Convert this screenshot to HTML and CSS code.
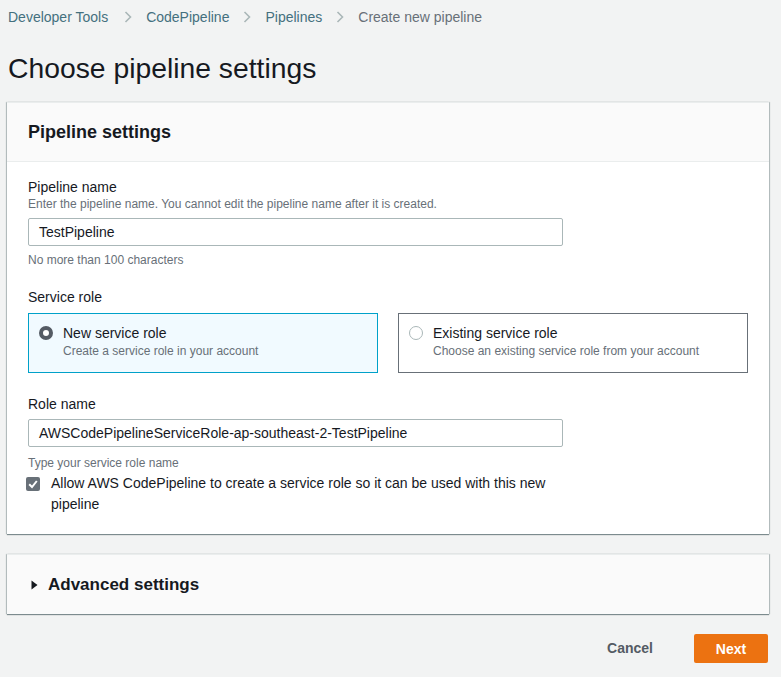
FILE: index.html
```html
<!DOCTYPE html>
<html lang="en">
<head>
<meta charset="utf-8">
<title>Choose pipeline settings</title>
<link rel="stylesheet" href="styles.css">
</head>
<body>
<div class="page">
  <nav class="crumbs">
    <a class="crumb-link crumb-first">Developer Tools</a>
    <svg class="chev" width="8" height="12" viewBox="0 0 8 12"><path d="M1.5 1 L6.5 6 L1.5 11" fill="none" stroke="#aab7b8" stroke-width="1.6"/></svg>
    <a class="crumb-link">CodePipeline</a>
    <svg class="chev" width="8" height="12" viewBox="0 0 8 12"><path d="M1.5 1 L6.5 6 L1.5 11" fill="none" stroke="#aab7b8" stroke-width="1.6"/></svg>
    <a class="crumb-link">Pipelines</a>
    <svg class="chev" width="8" height="12" viewBox="0 0 8 12"><path d="M1.5 1 L6.5 6 L1.5 11" fill="none" stroke="#aab7b8" stroke-width="1.6"/></svg>
    <span class="crumb-current">Create new pipeline</span>
  </nav>

  <h1 class="title">Choose pipeline settings</h1>

  <section class="card">
    <header class="card-header">
      <h2 class="card-title">Pipeline settings</h2>
    </header>
    <div class="card-body">
      <div class="field">
        <div class="label">Pipeline name</div>
        <div class="desc">Enter the pipeline name. You cannot edit the pipeline name after it is created.</div>
        <div class="input">TestPipeline</div>
        <div class="hint">No more than 100 characters</div>
      </div>

      <div class="field field-role">
        <div class="label">Service role</div>
        <div class="tiles">
          <div class="tile tile-selected">
            <span class="radio radio-on"></span>
            <div class="tile-text">
              <div class="tile-title">New service role</div>
              <div class="tile-desc">Create a service role in your account</div>
            </div>
          </div>
          <div class="tile">
            <span class="radio"></span>
            <div class="tile-text">
              <div class="tile-title">Existing service role</div>
              <div class="tile-desc">Choose an existing service role from your account</div>
            </div>
          </div>
        </div>
      </div>

      <div class="field field-rolename">
        <div class="label">Role name</div>
        <div class="input">AWSCodePipelineServiceRole-ap-southeast-2-TestPipeline</div>
        <div class="hint hint-role">Type your service role name</div>
        <div class="check-row">
          <span class="checkbox">
            <svg width="14" height="14" viewBox="0 0 14 14"><path d="M3.2 7.2 L6 10 L10.8 4" fill="none" stroke="#ffffff" stroke-width="2"/></svg>
          </span>
          <span class="check-text">Allow AWS CodePipeline to create a service role so it can be used with this new pipeline</span>
        </div>
      </div>
    </div>
  </section>

  <section class="card card-adv">
    <svg class="caret" width="7" height="10" viewBox="0 0 7 10"><path d="M0.5 0.5 L6.5 5 L0.5 9.5 Z" fill="#16191f"/></svg>
    <h2 class="card-title adv-title">Advanced settings</h2>
  </section>

  <div class="actions">
    <button class="btn-link">Cancel</button>
    <button class="btn-primary">Next</button>
  </div>
</div>
</body>
</html>
```
FILE: styles.css
```css
html, body {
  margin: 0;
  padding: 0;
  background: #f2f3f3;
}
body {
  font-family: "Liberation Sans", Arial, sans-serif;
  color: #16191f;
  font-size: 14px;
}
.page {
  padding: 7px 12px 0 7px;
}
.crumbs {
  display: flex;
  align-items: center;
  gap: 12px;
  height: 20px;
  line-height: 20px;
  padding-left: 1px;
  font-size: 14px;
}
.crumb-link {
  color: #44707e;
}
.crumb-first {
  margin-right: 2px;
}
.crumb-current {
  color: #687078;
}
.chev {
  display: block;
  margin: 0 2px;
}
.title {
  margin: 23px 0 0 1px;
  font-size: 28.3px;
  font-weight: 400;
  line-height: 36px;
  color: #16191f;
}
.card {
  margin-top: 16px;
  width: 762px;
  background: #ffffff;
  border-top: 1px solid #eaeded;
  box-shadow: 0 1px 1px 0 rgba(0, 28, 36, 0.45), 1px 0 1px 0 rgba(0, 28, 36, 0.2), -1px 0 1px 0 rgba(0, 28, 36, 0.2);
}
.card-header {
  background: #fafafa;
  padding: 18px 20px 18px 21px;
  border-bottom: 1px solid #eaeded;
}
.card-title {
  margin: 0;
  font-size: 18px;
  font-weight: 700;
  line-height: 22px;
}
.card-body {
  padding: 16px 20px 19px 21px;
}
.label {
  font-size: 14px;
  line-height: 18px;
}
.desc {
  font-size: 12px;
  line-height: 16px;
  color: #687078;
}
.input {
  box-sizing: border-box;
  margin-top: 6px;
  width: 535px;
  height: 28px;
  border: 1px solid #aab7b8;
  border-radius: 2px;
  background: #ffffff;
  padding: 0 10px;
  line-height: 26px;
  font-size: 14px;
}
.hint {
  margin-top: 6px;
  font-size: 12px;
  line-height: 16px;
  color: #687078;
}
.field-role {
  margin-top: 20px;
}
.tiles {
  margin-top: 7px;
  display: grid;
  grid-template-columns: 350px 350px;
  gap: 20px;
}
.tile {
  box-sizing: border-box;
  height: 60px;
  display: flex;
  align-items: flex-start;
  gap: 10px;
  padding: 11px 10px 0 10px;
  border: 1px solid #687078;
  background: #ffffff;
}
.tile-selected {
  background: #f1faff;
  border-color: #00a1c9;
}
.radio {
  box-sizing: border-box;
  flex: none;
  width: 14px;
  height: 14px;
  margin-top: 1px;
  border-radius: 50%;
  border: 1px solid #aab7b8;
  background: #ffffff;
}
.radio-on {
  border: 4.5px solid #545b64;
}
.tile-title {
  font-size: 14px;
  line-height: 16px;
}
.tile-desc {
  margin-top: 2px;
  font-size: 12px;
  line-height: 16px;
  color: #687078;
}
.field-rolename {
  margin-top: 22px;
}
.hint-role {
  margin-top: 8px;
}
.check-row {
  margin-top: 2px;
  display: flex;
  align-items: flex-start;
  gap: 11px;
  margin-left: -2px;
}
.checkbox {
  flex: none;
  width: 14px;
  height: 14px;
  margin-top: 4px;
  border-radius: 2px;
  background: #687078;
  display: flex;
}
.check-text {
  width: 520px;
  font-size: 14px;
  line-height: 21px;
}
.card-adv {
  margin-top: 20px;
  box-sizing: border-box;
  height: 60px;
  background: #fafafa;
  display: flex;
  align-items: center;
  gap: 10px;
  padding-left: 24px;
}
.adv-title {
  font-size: 17px;
}
.caret {
  display: block;
}
.actions {
  margin-top: 20px;
  width: 762px;
  display: flex;
  justify-content: flex-end;
  align-items: center;
  gap: 23px;
}
.btn-link {
  border: none;
  background: none;
  padding: 0 18px;
  font-family: "Liberation Sans", Arial, sans-serif;
  font-size: 14px;
  font-weight: 700;
  color: #545b64;
  line-height: 29px;
}
.btn-primary {
  box-sizing: border-box;
  width: 74px;
  height: 29px;
  border: none;
  border-radius: 2px;
  background: #ec7211;
  color: #ffffff;
  font-family: "Liberation Sans", Arial, sans-serif;
  font-size: 14px;
  font-weight: 700;
  margin-right: 1px;
}
```
